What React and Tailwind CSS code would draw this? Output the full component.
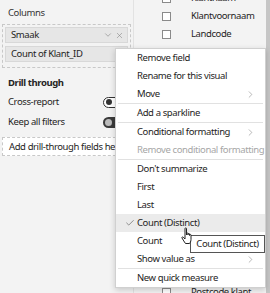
import { Check, ChevronRight, ChevronDown, X } from "lucide-react";

const font = { fontFamily: '"Segoe UI", "Noto Sans", sans-serif' };

function MenuItem({ label, sub, disabled, checked, active }) {
  return (
    <div className={`h-[18px] flex items-center pl-[21px] pr-[9px] relative whitespace-nowrap ${active ? "bg-[#ebebeb]" : ""}`}>
      {checked && <Check className="absolute left-[9px] w-[10px] h-[10px] text-[#555]" strokeWidth={1.5} />}
      <span className={`flex-1 ${disabled ? "text-[#a6a6a6]" : "text-[#252423]"}`}>{label}</span>
      {sub && <ChevronRight className="w-[11px] h-[11px] text-[#8a8a8a]" strokeWidth={1.3} />}
    </div>
  );
}

function Sep() {
  return <div className="h-px bg-[#e1e1e1] mx-[2px]" />;
}

function FieldRow({ label }) {
  return (
    <div className="h-[18px] flex items-center whitespace-nowrap">
      <span className="w-[9px] h-[9px] border border-[#8a8a8a] bg-white ml-[28px]" />
      <span className="ml-[20px] text-[#252423]">{label}</span>
    </div>
  );
}

function Hand() {
  return (
    <svg width="14" height="18" viewBox="0 0 14 18" className="absolute left-[181px] top-[227px]">
      <path
        d="M4 1.5c0-.8 1.5-.8 1.5 0V8V6.5c0-.8 1.5-.8 1.5 0V8V7c0-.8 1.5-.8 1.5 0v1.5V8c0-.8 1.5-.8 1.5 0v4.5c0 2-1 3.5-1.5 4H4.5C3.5 15 2 13 1 11c-.4-.8.5-1.5 1.2-.8L4 12Z"
        fill="#fff"
        stroke="#222"
        strokeWidth="1"
        strokeLinejoin="round"
      />
    </svg>
  );
}

export default function App() {
  return (
    <div
      className="w-[270px] h-[293px] relative overflow-hidden flex bg-[#f3f3f3] text-[9.5px] tracking-[-0.4px] leading-none"
      style={font}
    >
      <div className="w-[134px] shrink-0 border-r border-[#e2e2e2] bg-[#f3f3f3] flex flex-col">
        <div className="h-[24px] flex items-center pl-[8px] pt-[2px] text-[#333]">Columns</div>
        <div className="mx-[2px] border border-dashed border-[#c8c8c8] p-[2px] flex flex-col gap-[3px] h-[44px]">
          <div className="h-[16px] bg-[#e6e6e6] border border-[#d8d8d8] flex items-center pl-[5px] pr-[3px] text-[#252423]">
            <span className="flex-1">Smaak</span>
            <ChevronDown className="w-[10px] h-[10px] text-[#777]" strokeWidth={1.3} />
            <X className="w-[9px] h-[9px] text-[#777] ml-[2px]" strokeWidth={1.3} />
          </div>
          <div className="h-[16px] bg-[#e6e6e6] border border-[#d8d8d8] flex items-center pl-[5px] pr-[3px] text-[#252423]">
            <span className="flex-1">Count of Klant_ID</span>
            <ChevronDown className="w-[10px] h-[10px] text-[#777]" strokeWidth={1.3} />
          </div>
        </div>
        <div className="h-[24px] flex items-end pl-[8px] pb-[5px] font-bold text-[#252423]">Drill through</div>
        <div className="h-[20px] flex items-center pl-[8px] text-[#252423]">
          <span className="flex-1">Cross-report</span>
          <span className="w-[22px] h-[11px] rounded-full border border-[#333] bg-white flex items-center pl-[2px] mr-[8px]">
            <span className="w-[6px] h-[6px] rounded-full bg-[#333]" />
          </span>
        </div>
        <div className="h-[20px] flex items-center pl-[8px] text-[#252423]">
          <span className="flex-1">Keep all filters</span>
          <span className="w-[22px] h-[11px] rounded-full bg-[#3b3b3b] flex items-center pl-[2px] mr-[8px]">
            <span className="w-[7px] h-[7px] rounded-full bg-[#bbb]" />
          </span>
        </div>
        <div className="mt-[5px] mx-[2px] h-[19px] border border-dashed border-[#c8c8c8] bg-white flex items-center pl-[6px] text-[#252423] whitespace-nowrap overflow-hidden">
          Add drill-through fields here
        </div>
      </div>
      <div className="flex-1 flex flex-col mt-[-11px]">
        <FieldRow label="Klantnaam" />
        <FieldRow label="Klantvoornaam" />
        <FieldRow label="Landcode" />
        <FieldRow label="Klanttype" />
        <div className="mt-auto mb-[-8px]">
          <FieldRow label="Postcode klant" />
        </div>
      </div>
      <div className="w-[4px] shrink-0 bg-[#c6c6c6]" />

      <div className="absolute left-[115px] top-[48px] w-[151px] bg-white border border-[#d0d0d0] shadow-[0_2px_6px_rgba(0,0,0,0.18)] flex flex-col">
        <MenuItem label="Remove field" />
        <MenuItem label="Rename for this visual" />
        <MenuItem label="Move" sub />
        <Sep />
        <MenuItem label="Add a sparkline" />
        <Sep />
        <MenuItem label="Conditional formatting" sub />
        <MenuItem label="Remove conditional formatting" disabled />
        <Sep />
        <MenuItem label="Don't summarize" />
        <MenuItem label="First" />
        <MenuItem label="Last" />
        <MenuItem label="Count (Distinct)" checked active />
        <MenuItem label="Count" />
        <MenuItem label="Show value as" sub />
        <Sep />
        <MenuItem label="New quick measure" />
      </div>

      <div className="absolute left-[190px] top-[235px] w-[75px] h-[18px] bg-white border border-[#555] flex items-center justify-center text-[#252423] whitespace-nowrap">
        Count (Distinct)
      </div>
      <Hand />
    </div>
  );
}
